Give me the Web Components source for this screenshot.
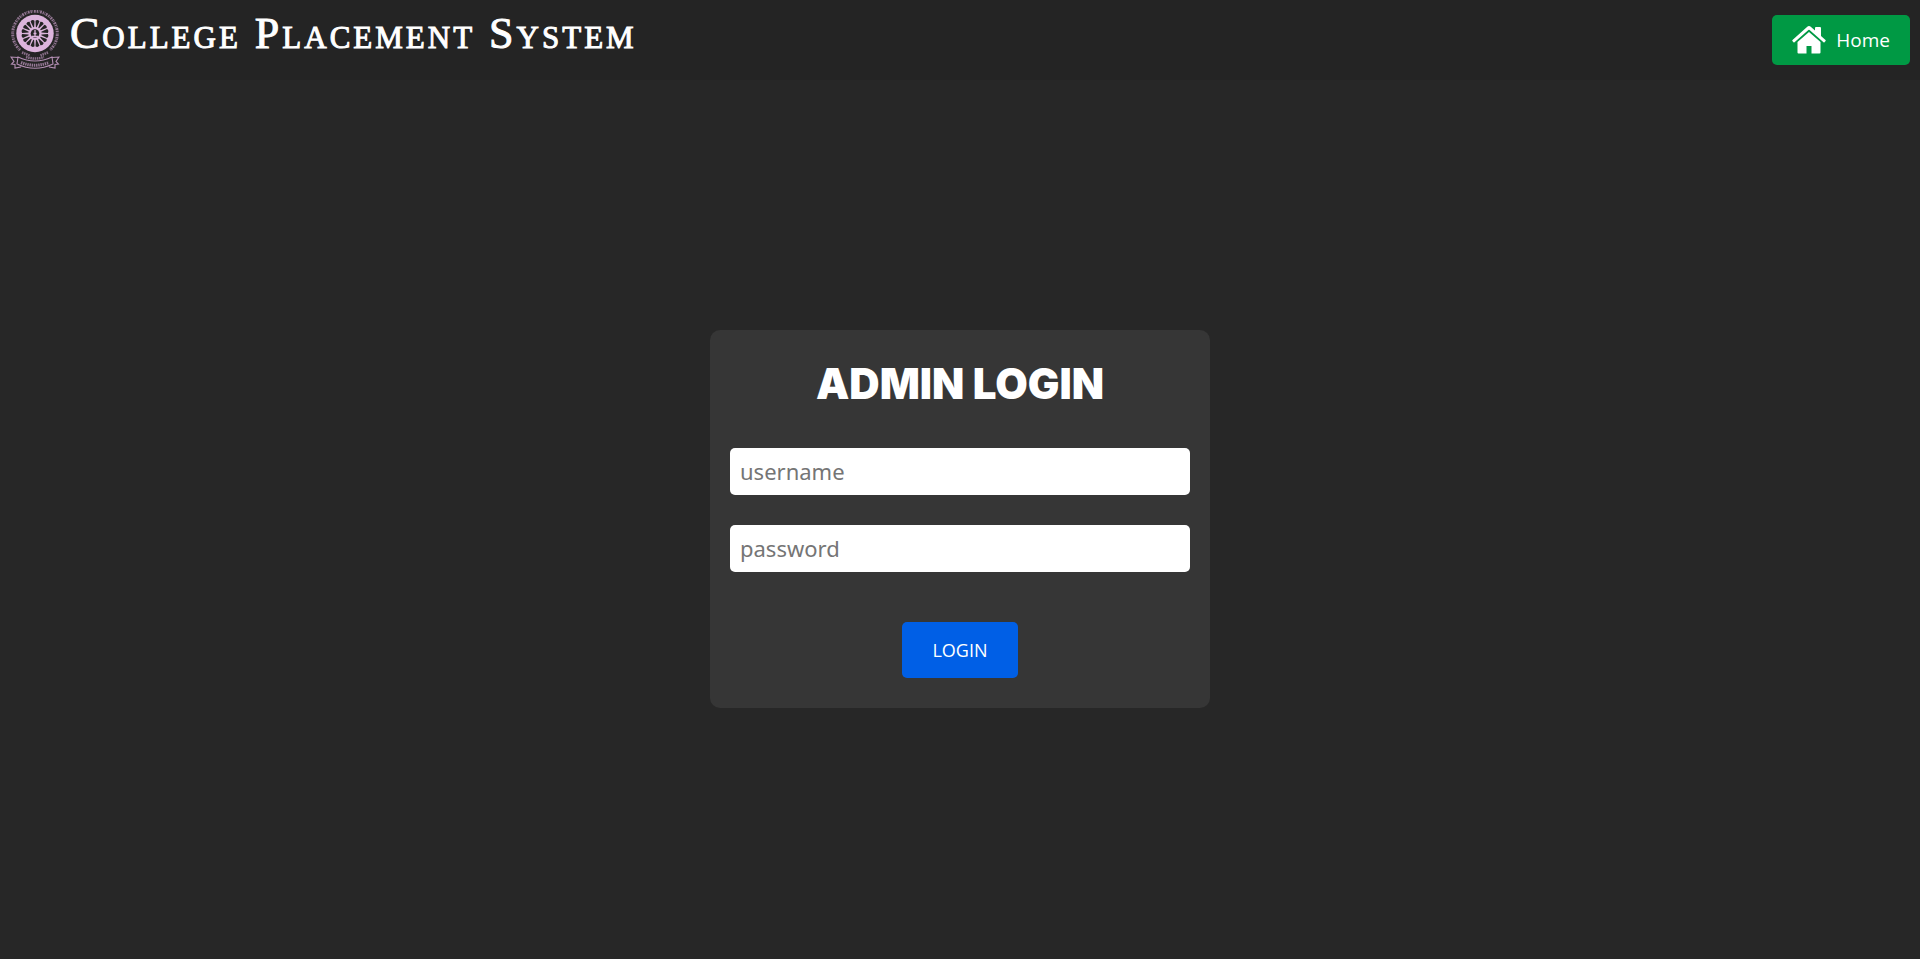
<!DOCTYPE html>
<html lang="en">
<head>
<meta charset="utf-8">
<title>College Placement System</title>
<style>
html, body { margin: 0; height: 100%; background: #272727; }
</style>
</head>
<body>
<placement-app>
  <site-header slot="header">
    <college-crest slot="logo"></college-crest>
    College Placement System
    <home-link slot="action" href="#home">Home</home-link>
  </site-header>
  <login-card heading="ADMIN LOGIN">
    <text-field name="username" type="text"></text-field>
    <text-field name="password" type="password"></text-field>
    <submit-button slot="action">LOGIN</submit-button>
  </login-card>
</placement-app>
<script>
class Base extends HTMLElement {
  constructor() {
    super();
    this.attachShadow({ mode: 'open' });
  }
  connectedCallback() { this.shadowRoot.innerHTML = this.render(); }
}

customElements.define('placement-app', class extends Base {
  render() {
    return `<style>
      :host { display: flex; flex-direction: column; min-height: 100%; background: #272727; color: #fff; }
      main { flex: 1; display: flex; align-items: center; justify-content: center; padding-bottom: 2px; }
    </style>
    <slot name="header"></slot><main><slot></slot></main>`;
  }
});

customElements.define('site-header', class extends Base {
  render() {
    return `<style>
      :host { display: block; background: #242424; }
      header { display: flex; align-items: center; gap: 10px; min-height: 80px; padding: 0 10px; box-sizing: border-box; }
      h1 { flex: 1; margin: 0; padding-bottom: 12px; font: 400 44px/48px "Liberation Serif", serif; font-variant: small-caps; letter-spacing: 3px; -webkit-text-stroke: 1px #fff; }
    </style>
    <header><slot name="logo"></slot><h1><slot></slot></h1><slot name="action"></slot></header>`;
  }
});

customElements.define('college-crest', class extends Base {
  render() {
    const gaps = Array.from({ length: 16 }, (_, i) =>
      `<path d="M24.600 17L23 10.800Q25 9 27 10.800L25.400 17Z" transform="rotate(${i * 22.5 + 11.25} 25 23.500)"/>`).join('');
    return `<style>
      :host { display: block; }
      svg { display: block; width: 50px; height: 60px; }
    </style>
    <svg viewBox="0 0 50 60" role="img" aria-label="College crest">
      <g fill="none" stroke="#b48fb4">
        <path d="M10 40A22.300 22.300 0 1 1 40 40" stroke-width="3" stroke-dasharray="1.3 .7 .6 .8 1.800 .9" stroke-opacity=".75"/>
        <path d="M12 42.500L20 45.500M38 42.500L30 45.500M16 47Q25 50 34 47" stroke-width="2.500" stroke-dasharray="1.500 .7" stroke-opacity=".7"/>
        <path d="M8 47Q25 55 42 47L43 54Q25 62.500 7 54ZM8 47.500L1 47L4 51.500L1.500 54L5 54.500L5 58L11 57M42 47.500L49 47L46 51.500L48.500 54L45 54.500L45 58L39 57" stroke-width="1.100"/>
        <path d="M11 52.500Q25 58 39 52.500" stroke-width="3" stroke-dasharray="1.400 .8" stroke-opacity=".8"/>
      </g>
      <circle cx="25" cy="23.500" r="18.700" fill="#dcb4dc"/>
      <g fill="#242424">${gaps}<circle cx="25" cy="23.500" r="4.300"/></g>
      <path d="M25 20v6M22 26.500h6M23.500 23.500h3" stroke="#dcb4dc" stroke-width="1.300"/>
    </svg>`;
  }
});

customElements.define('home-link', class extends Base {
  render() {
    return `<style>
      :host { display: block; }
      a { display: flex; align-items: center; gap: 10px; height: 50px; padding: 0 20px; box-sizing: border-box; border-radius: 5px; background: #009944; color: #fff; text-decoration: none; font: 400 19px/28px "Open Sans", sans-serif; }
      svg { width: 34px; height: 28px; }
    </style>
    <a href="${this.getAttribute('href')}">
      <svg viewBox="0 0 34 28" fill="#fff" aria-hidden="true">
        <path d="M17 0Q18 0 19 1L23 4.500V2Q23 1 24 1H28Q29 1 29 2V10L33.500 14Q34 14.500 33.600 15L32.500 16.200Q32 16.700 31.500 16.200L17.600 4Q17 3.600 16.400 4L2.500 16.200Q2 16.700 1.500 16.200L.4 15Q0 14.500.5 14L15 1Q16 0 17 0Z"/>
        <path d="M17 6L28.500 16V26.500Q28.500 27.500 27.500 27.500H19.500V20H14.500V27.500H6.500Q5.500 27.500 5.500 26.500V16Z"/>
      </svg><slot></slot></a>`;
  }
});

customElements.define('login-card', class extends Base {
  render() {
    return `<style>
      :host { display: block; width: 500px; max-width: 100%; }
      form { display: flex; flex-direction: column; gap: 30px; padding: 30px 20px; box-sizing: border-box; border-radius: 10px; background: #363636; }
      h2 { margin: 0 0 10px; text-align: center; font: 900 42px/48px Inter, sans-serif; }
      footer { display: flex; justify-content: center; padding-top: 20px; }
    </style>
    <form>
      <h2>${this.getAttribute('heading')}</h2>
      <slot></slot>
      <footer><slot name="action"></slot></footer>
    </form>`;
  }
});

customElements.define('text-field', class extends Base {
  render() {
    const name = this.getAttribute('name');
    return `<style>
      :host { display: block; }
      input { display: block; width: 100%; height: 47px; padding: 0 10px; box-sizing: border-box; border: 0; border-radius: 5px; background: #fff; color: #222; font: 400 22px/28px "Noto Sans", sans-serif; }
      input::placeholder { color: #757575; opacity: 1; }
    </style>
    <input type="${this.getAttribute('type')}" name="${name}" placeholder="${name}" aria-label="${name}">`;
  }
});

customElements.define('submit-button', class extends Base {
  render() {
    return `<style>
      :host { display: block; }
      button { display: block; height: 56px; padding: 0 30px; border: 0; border-radius: 5px; background: #005fe6; color: #fff; font: 400 18px/28px "Open Sans", sans-serif; }
    </style>
    <button type="submit"><slot></slot></button>`;
  }
});
</script>
</body>
</html>
